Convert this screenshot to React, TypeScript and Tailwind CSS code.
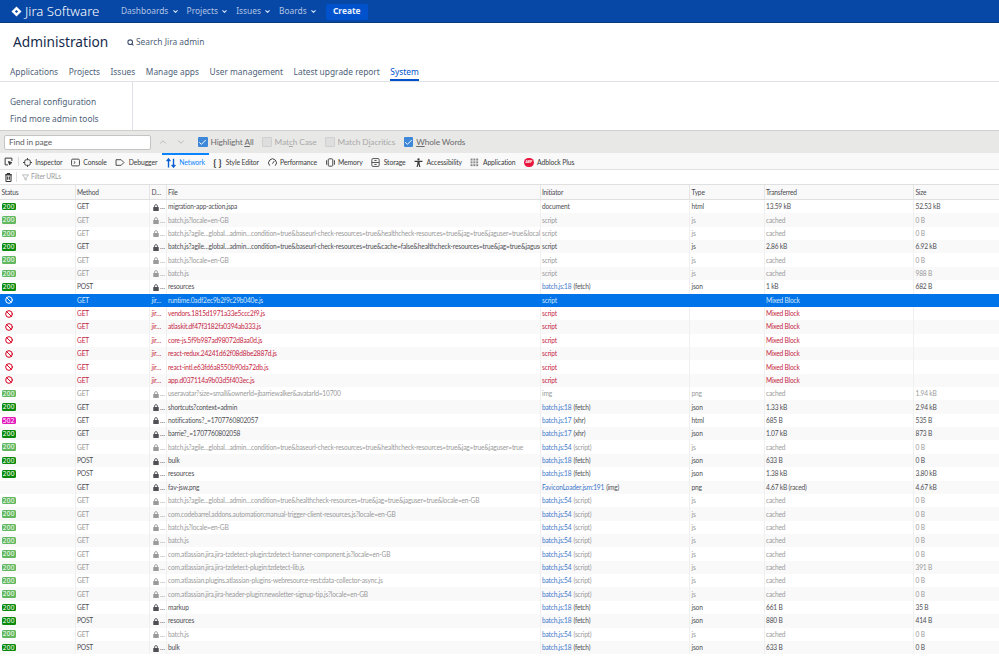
import React from "react";
import { ChevronDown, ChevronUp, Search, Ban, Check } from "lucide-react";

const COLS = "grid-cols-[74.5px_74.5px_16.5px_374px_149.5px_74.5px_149.5px_86px]";

type K = "n" | "f" | "s" | "b";
type Row = { k: K; st?: string; m: string; d?: string; file: string; link?: string; cause?: string; type: string; tr: string; size: string };

const longA = "batch.js?agile…global…admin…condition=true&baseurl-check-resources=true&healthcheck-resources=true&jag=true&jaguser=true&locale=en-GB";
const longB = "batch.js?agile…global…admin…condition=true&baseurl-check-resources=true&cache=false&healthcheck-resources=true&jag=true&jaguser=true&locale=en-GB";

const f = (file: string, size = "0 B"): Row => ({ k: "f", st: "200", m: "GET", file, type: "js", tr: "cached", size, link: "batch.js:54", cause: "(script)" });
const fs = (file: string, size = "0 B"): Row => ({ k: "f", st: "200", m: "GET", file, type: "js", tr: "cached", size, cause: "script" });
const b = (file: string): Row => ({ k: "b", m: "GET", d: "jir…", file, cause: "script", type: "", tr: "Mixed Block", size: "" });

const rows: Row[] = [
  { k: "n", st: "200", m: "GET", file: "migration-app-action.jspa", cause: "document", type: "html", tr: "13.59 kB", size: "52.53 kB" },
  fs("batch.js?locale=en-GB"),
  fs(longA),
  { k: "n", st: "200", m: "GET", file: longB, cause: "script", type: "js", tr: "2.86 kB", size: "6.92 kB" },
  fs("batch.js?locale=en-GB"),
  fs("batch.js", "988 B"),
  { k: "n", st: "200", m: "POST", file: "resources", link: "batch.js:18", cause: "(fetch)", type: "json", tr: "1 kB", size: "682 B" },
  { ...b("runtime.0adf2ec9b2f9c29b040e.js"), k: "s" },
  b("vendors.1815d1971a33e5ccc2f9.js"),
  b("atlaskit.df47f3182fa0394ab333.js"),
  b("core-js.5f9b987ad98072d8aa0d.js"),
  b("react-redux.24241d62f08d8be2887d.js"),
  b("react-intl.e63fd6a8550b90da72db.js"),
  b("app.d037114a9b03d5f403ec.js"),
  { k: "f", st: "200", m: "GET", file: "useravatar?size=small&ownerId=jbarriewalker&avatarId=10700", cause: "img", type: "png", tr: "cached", size: "1.94 kB" },
  { k: "n", st: "200", m: "GET", file: "shortcuts?context=admin", link: "batch.js:18", cause: "(fetch)", type: "json", tr: "1.33 kB", size: "2.94 kB" },
  { k: "n", st: "502", m: "GET", file: "notifications?_=1707760802057", link: "batch.js:17", cause: "(xhr)", type: "html", tr: "685 B", size: "535 B" },
  { k: "n", st: "200", m: "GET", file: "barrie?_=1707760802058", link: "batch.js:17", cause: "(xhr)", type: "json", tr: "1.07 kB", size: "873 B" },
  f("batch.js?agile…global…admin…condition=true&baseurl-check-resources=true&healthcheck-resources=true&jag=true&jaguser=true"),
  { k: "n", st: "200", m: "POST", file: "bulk", link: "batch.js:18", cause: "(fetch)", type: "json", tr: "633 B", size: "0 B" },
  { k: "n", st: "200", m: "POST", file: "resources", link: "batch.js:18", cause: "(fetch)", type: "json", tr: "1.38 kB", size: "3.80 kB" },
  { k: "n", m: "GET", file: "fav-jsw.png", link: "FaviconLoader.jsm:191", cause: "(img)", type: "png", tr: "4.67 kB (raced)", size: "4.67 kB" },
  f("batch.js?agile…global…admin…condition=true&healthcheck-resources=true&jag=true&jaguser=true&locale=en-GB"),
  f("com.codebarrel.addons.automation:manual-trigger-client-resources.js?locale=en-GB"),
  f("batch.js?locale=en-GB"),
  f("batch.js"),
  f("com.atlassian.jira.jira-tzdetect-plugin:tzdetect-banner-component.js?locale=en-GB"),
  f("com.atlassian.jira.jira-tzdetect-plugin:tzdetect-lib.js", "391 B"),
  f("com.atlassian.plugins.atlassian-plugins-webresource-rest:data-collector-async.js"),
  f("com.atlassian.jira.jira-header-plugin:newsletter-signup-tip.js?locale=en-GB"),
  { k: "n", st: "200", m: "GET", file: "markup", link: "batch.js:18", cause: "(fetch)", type: "json", tr: "661 B", size: "35 B" },
  { k: "n", st: "200", m: "POST", file: "resources", link: "batch.js:18", cause: "(fetch)", type: "json", tr: "880 B", size: "414 B" },
  f("batch.js"),
  { k: "n", st: "200", m: "POST", file: "bulk", link: "batch.js:18", cause: "(fetch)", type: "json", tr: "633 B", size: "0 B" },
];

function JiraLogo() {
  return (
    <svg width="11" height="11" viewBox="0 0 24 24" fill="white" className="shrink-0">
      <path d="M12 1 23 12 12 23 1 12Z" />
      <path d="M12 8.500 15.500 12 12 15.500 8.500 12Z" fill="#0747a6" />
    </svg>
  );
}

function NavItem({ label }: { label: string }) {
  return (
    <div className="flex items-center gap-[3.500px] text-[#b3c5e4]">
      <span>{label}</span>
      <ChevronDown size={7} strokeWidth={3.5} className="text-[#deebff]" />
    </div>
  );
}

function Tab({ label, active }: { label: string; active?: boolean }) {
  return (
    <div className={`h-full flex items-end pb-[0.5px] border-b-2 ${active ? "border-[#0052cc] text-[#0052cc]" : "border-transparent text-[#505f79]"}`}>
      {label}
    </div>
  );
}

function FindCheck({ checked, children }: { checked?: boolean; children: React.ReactNode }) {
  return (
    <div className={`flex items-center gap-[3px] ${checked ? "text-[#6b6b6b]" : "text-[#a8a8a8]"}`}>
      {checked ? (
        <span className="w-[9.500px] h-[9.500px] rounded-[1px] bg-[#3f87d8] flex items-center justify-center">
          <Check size={9} strokeWidth={2.5} className="text-white" />
        </span>
      ) : (
        <span className="w-[9.500px] h-[9.500px] rounded-[1px] bg-[#dedede] border border-[#cfcfcf]" />
      )}
      <span>{children}</span>
    </div>
  );
}

const IC = "#3b3b3b";
const Icons: Record<string, React.ReactNode> = {
  Inspector: (
    <svg width="9" height="9" viewBox="0 0 16 16" fill="none" stroke={IC} strokeWidth="1.7"><rect x="3" y="3" width="10" height="10" rx="3" /><path d="M8 0v3M8 13v3M0 8h3M13 8h3" /></svg>
  ),
  Console: (
    <svg width="9" height="9" viewBox="0 0 16 16" fill="none" stroke={IC} strokeWidth="1.6"><rect x="1" y="2" width="14" height="12" rx="2" /><path d="M5 6l2.500 2L5 10" /></svg>
  ),
  Debugger: (
    <svg width="10" height="9" viewBox="0 0 16 16" fill="none" stroke={IC} strokeWidth="1.6"><path d="M1 3h9l5 5-5 5H1z" strokeLinejoin="round" /></svg>
  ),
  Network: (
    <svg width="10" height="10" viewBox="0 0 16 16" fill="none" stroke="#0a5fd0" strokeWidth="2.2"><path d="M4 15V2M1 5l3-3.500L7 5" /><path d="M12 1v13M9 11l3 3.500 3-3.500" /></svg>
  ),
  "Style Editor": <span className="w-[9px] text-[10px] leading-none font-bold text-[#3b3b3b] mt-[-2px] whitespace-nowrap">{"{ }"}</span>,
  Performance: (
    <svg width="9" height="9" viewBox="0 0 16 16" fill="none" stroke={IC} strokeWidth="1.7"><path d="M3 13.500A7 7 0 1 1 13 13.500" /><path d="M8 10l3-4.500" /></svg>
  ),
  Memory: (
    <svg width="9" height="9" viewBox="0 0 16 16" fill="none" stroke={IC} strokeWidth="1.6"><rect x="4" y="1.500" width="8" height="13" rx="1.500" /><path d="M1 4v8M15 4v8" /></svg>
  ),
  Storage: (
    <svg width="9" height="9" viewBox="0 0 16 16" fill="none" stroke={IC} strokeWidth="1.500"><rect x="1.500" y="1" width="13" height="14" rx="2" /><path d="M1.500 8h13M6 4.500h4M6 11.500h4" /></svg>
  ),
  Accessibility: (
    <svg width="9" height="9" viewBox="0 0 16 16" fill={IC}><circle cx="8" cy="2.500" r="2" /><path d="M1 5h14v2H10v3l1.500 6h-2L8 11l-1.500 5h-2L6 10V7H1z" /></svg>
  ),
  Application: (
    <svg width="9" height="9" viewBox="0 0 16 16" fill="#8a8a8a"><rect x="1" y="1" width="3.500" height="3.500" /><rect x="6" y="1" width="3.500" height="3.500" /><rect x="11" y="1" width="3.500" height="3.500" /><rect x="1" y="6" width="3.500" height="3.500" /><rect x="6" y="6" width="3.500" height="3.500" /><rect x="11" y="6" width="3.500" height="3.500" /><rect x="1" y="11" width="3.500" height="3.500" /><rect x="6" y="11" width="3.500" height="3.500" /><rect x="11" y="11" width="3.500" height="3.500" /></svg>
  ),
  "Adblock Plus": <span className="w-[9.500px] h-[9.500px] rounded-full bg-[#e8173f] flex items-center justify-center text-white text-[3.500px] font-bold leading-none">ABP</span>,
};

const toolTabs = ["Inspector", "Console", "Debugger", "Network", "Style Editor", "Performance", "Memory", "Storage", "Accessibility", "Application", "Adblock Plus"];

function Badge({ st, faint }: { st: string; faint: boolean }) {
  const bg = st === "502" ? "bg-[#e21bbd]" : faint ? "bg-[#62b85f]" : "bg-[#0a8a0a]";
  return (
    <span className={`w-[13.500px] h-[7.500px] rounded-[1.500px] text-white text-[6.5px] leading-[7.500px] text-center font-['Noto_Sans',sans-serif] tracking-[0.2px] ${bg}`}>{st}</span>
  );
}

function LockIcon() {
  return (
    <svg width="6" height="7" viewBox="0 0 12 14" fill="currentColor" className="shrink-0">
      <path d="M3.200 6V4a2.800 2.800 0 0 1 5.600 0v2" fill="none" stroke="currentColor" strokeWidth="1.700" />
      <rect x="0.500" y="6" width="11" height="8" rx="1" />
    </svg>
  );
}

function NetRow({ r, i }: { r: Row; i: number }) {
  const text =
    r.k === "s" ? "text-[#d5e6fb]" : r.k === "b" ? "text-[#c5253f]" : r.k === "f" ? "text-[#9a9a9a]" : "text-[#4f4f54]";
  const bg = r.k === "s" ? "bg-[#0074e8]" : i % 2 === 1 ? "bg-[#f9f9fa]" : "bg-white";
  const cell = "flex items-center min-w-0 overflow-hidden whitespace-nowrap pl-[1.500px] pt-[1px] h-full";
  const sep = r.k === "s" ? "border-l border-transparent" : "border-l border-[#f0f0f0]";
  return (
    <div className={`grid ${COLS} h-[13.36px] items-center text-[6.6px] tracking-[-0.18px] ${text} ${bg}`}>
      <div className="flex items-center pl-[2px] h-full">
        {r.st ? (
          <Badge st={r.st} faint={r.k === "f"} />
        ) : r.k === "s" || r.k === "b" ? (
          <Ban size={8} strokeWidth={3} className={`ml-[3px] ${r.k === "s" ? "text-white" : "text-[#d70022]"}`} />
        ) : null}
      </div>
      <div className={`${cell} ${sep}`}>{r.m}</div>
      <div className={`${cell} ${sep}`}>
        {r.d ? r.d : (
          <span className="flex items-center gap-[1.500px] ml-[1px]">
            <LockIcon />
            <span>…</span>
          </span>
        )}
      </div>
      <div className={`${cell} ${sep}`}>{r.file}</div>
      <div className={`${cell} ${sep}`}>
        {r.link && <span className="text-[#3f78c9] mr-[2px]">{r.link}</span>}
        <span>{r.cause}</span>
      </div>
      <div className={`${cell} ${sep}`}>{r.type}</div>
      <div className={`${cell} ${sep}`}>{r.tr}</div>
      <div className={`${cell} ${sep}`}>{r.size}</div>
    </div>
  );
}

export default function App() {
  return (
    <div className="w-[999px] h-[660px] overflow-hidden bg-white flex flex-col font-['Noto_Sans',sans-serif]">
      {/* Jira header */}
      <header className="h-[23px] shrink-0 bg-[#0747a6] border-b border-[#0a3a80] flex items-center pl-[11px] text-[8.4px] pt-[1px]">
        <div className="flex items-center gap-[3px] w-[110px]">
          <JiraLogo />
          <span className="text-white text-[13.2px] leading-none font-light">Jira Software</span>
        </div>
        <div className="flex items-center gap-[7.7px]">
          <NavItem label="Dashboards" />
          <NavItem label="Projects" />
          <NavItem label="Issues" />
          <NavItem label="Boards" />
        </div>
        <div className="ml-[8.5px] w-[42px] h-[16px] rounded-[2px] bg-[#0052cc] text-[#e8f0ff] font-bold flex items-center justify-center">Create</div>
      </header>

      {/* Administration */}
      <div className="h-[59px] shrink-0 border-b border-[#dfe1e6] flex flex-col">
        <div className="h-[36px] shrink-0 flex items-center pl-[13px] pt-[3px]">
          <h1 className="text-[#172b4d] text-[13.7px] w-[114px] font-normal">Administration</h1>
          <Search size={7} strokeWidth={3.5} className="text-[#42526e]" />
          <span className="ml-[2px] text-[8.4px] text-[#505f79]">Search Jira admin</span>
        </div>
        <nav className="flex-1 flex gap-[10.5px] pl-[10px] text-[8.4px]">
          <Tab label="Applications" />
          <Tab label="Projects" />
          <Tab label="Issues" />
          <Tab label="Manage apps" />
          <Tab label="User management" />
          <Tab label="Latest upgrade report" />
          <Tab label="System" active />
        </nav>
      </div>

      {/* sidebar */}
      <div className="h-[48px] shrink-0 flex">
        <div className="w-[133px] border-r border-[#dfe1e6] pl-[10px] pt-[13px] flex flex-col gap-[3.600px] text-[8.4px] text-[#505f79] leading-[13px]">
          <div>General configuration</div>
          <div>Find more admin tools</div>
        </div>
      </div>

      {/* find bar */}
      <div className="h-[23px] shrink-0 bg-[#e8e8e7] border-t border-[#cfcfcd] flex items-center pl-[4px] text-[8.3px] tracking-[-0.1px] font-['Lato',sans-serif]">
        <div className="w-[147px] h-[15px] bg-white border border-[#c4c4c4] rounded-[2px] flex items-center pl-[4px] text-[#5e5e5e]">Find in page</div>
        <div className="w-[47px] flex items-center pl-[7px] gap-[8px] text-[#b0b0b0]">
          <ChevronUp size={10} />
          <ChevronDown size={10} />
        </div>
        <div className="flex items-center gap-[8.5px]">
          <FindCheck checked>Highlight <u>A</u>ll</FindCheck>
          <FindCheck>Mat<u>c</u>h Case</FindCheck>
          <FindCheck>Match D<u>i</u>acritics</FindCheck>
          <FindCheck checked><u>W</u>hole Words</FindCheck>
        </div>
      </div>

      {/* devtools tabs */}
      <div className="h-[17px] shrink-0 bg-[#f9f9fa] border-b border-[#e0e0e1] flex items-center text-[6.8px] tracking-[-0.1px] text-[#3b3b3b] font-['Lato',sans-serif]">
        <div className="w-[17.500px] flex justify-center">
          <svg width="9" height="9" viewBox="0 0 16 16" fill="none" stroke="#333" strokeWidth="1.7"><path d="M7 14H2V2h12v5" /><path d="M8 8l6 2-2.500 1.500L10 14z" fill="#333" /></svg>
        </div>
        <div className="h-[9px] w-px bg-[#d7d7d8]" />
        {toolTabs.map((t) => (
          <div
            key={t}
            className={`h-full flex items-center gap-[3.500px] px-[4.25px] pt-[1px] border-t-2 ${t === "Network" ? "border-t-[#0a84ff] text-[#0a84ff]" : "border-t-transparent"}`}
          >
            {Icons[t]}
            <span>{t}</span>
          </div>
        ))}
      </div>

      {/* filter */}
      <div className="h-[15px] shrink-0 border-b border-[#e0e0e1] flex items-center text-[6.6px] tracking-[-0.18px] text-[#9a9a9a] font-['Lato',sans-serif]">
        <div className="w-[17px] flex justify-center border-r border-[#e0e0e1] h-[10px] items-center">
          <svg width="7" height="9" viewBox="0 0 12 16" fill="none" stroke="#333" strokeWidth="1.800"><path d="M0 3h12M4 3V1h4v2" /><rect x="1.500" y="3" width="9" height="12" rx="1" /><path d="M4.500 6v6M7.500 6v6" /></svg>
        </div>
        <svg width="7" height="7" viewBox="0 0 16 16" fill="none" stroke="#aaa" strokeWidth="1.800" className="ml-[5px] mr-[2px]"><path d="M1 2h14L9.500 8.500V14l-3-1.500v-4z" /></svg>
        <span>Filter URLs</span>
      </div>

      {/* table head */}
      <div className={`grid ${COLS} h-[15px] shrink-0 bg-[#f9f9fa] border-b border-[#e0e0e1] text-[6.6px] tracking-[-0.18px] text-[#4a4a4f] font-['Lato',sans-serif]`}>
        {["Status", "Method", "D…", "File", "Initiator", "Type", "Transferred", "Size"].map((h, i) => (
          <div key={h} className={`flex items-center pl-[1.500px] pt-[1px] ${i ? "border-l border-[#e6e6e6]" : ""}`}>{h}</div>
        ))}
      </div>

      {/* rows */}
      <div className="font-['Lato',sans-serif]">
        {rows.map((r, i) => (
          <NetRow key={i} r={r} i={i} />
        ))}
      </div>
    </div>
  );
}
